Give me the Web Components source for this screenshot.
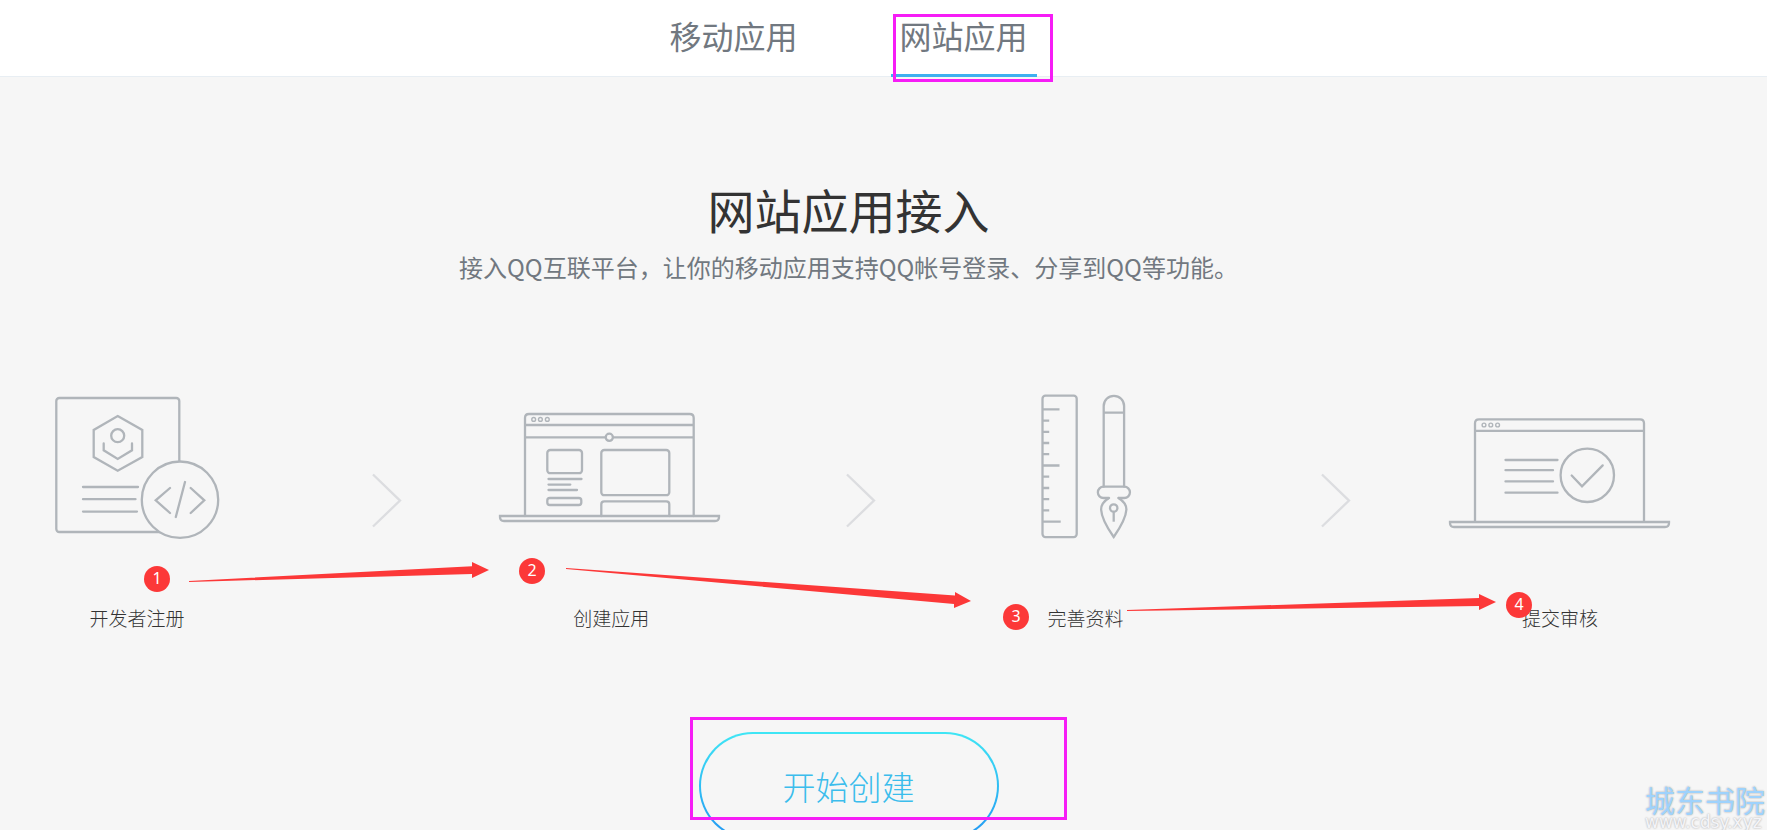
<!DOCTYPE html>
<html lang="zh-CN">
<head>
<meta charset="utf-8">
<title>网站应用接入</title>
<style>
  html, body {
    height: 100%;
    margin: 0;
  }

  body {
    overflow: hidden;
    background: #f6f6f6;
    font-family: "Noto Sans CJK SC", sans-serif;
    color: #333;
  }
</style>
</head>
<body>
<connect-page></connect-page>

<template id="nav-tab">
  <style>
    :host {
      display: block;
    }

    a {
      display: block;
      box-sizing: border-box;
      height: 77px;
      padding: 0 9px;
      border-bottom: 3px solid transparent;
      font-size: 32px;
      line-height: 70px;
      color: #717880;
      text-decoration: none;
    }

    :host([active]) a {
      border-color: #3fb0f0;
    }
  </style>
  <a href="#"><slot></slot></a>
</template>

<template id="flow-step">
  <style>
    :host {
      display: flex;
      flex-direction: column;
      align-items: center;
      width: 220px;
    }

    span {
      margin-top: 61px;
      font-size: 19px;
      font-weight: 300;
      line-height: 30px;
    }
  </style>
  <slot name="icon"></slot>
  <span><slot></slot></span>
</template>

<template id="flow-chevron">
  <style>
    :host {
      display: block;
      width: 56px;
    }

    svg {
      display: block;
      fill: none;
      stroke: #dcdde0;
      stroke-width: 2.3;
    }
  </style>
  <svg width="56" height="150" viewBox="0 0 56 150"><path d="M27 82.5L54 108.6 27 134.5"/></svg>
</template>

<template id="start-button">
  <style>
    :host {
      display: block;
    }

    button {
      width: 300px;
      height: 108px;
      padding: 0;
      border: 2px solid transparent;
      border-radius: 54px;
      background: linear-gradient(#f6f6f6, #f6f6f6) padding-box,
        linear-gradient(#3fe6f5, #2196f3) border-box;
      font: 300 33px "Noto Sans CJK SC", sans-serif;
      color: #3bbdec;
    }
  </style>
  <button type="button"><slot></slot></button>
</template>

<template id="site-mark">
  <style>
    :host {
      display: block;
      width: 122px;
      white-space: nowrap;
      text-shadow: 0 0 2px #bbb, 0 0 2px #ccc;
    }

    div {
      font-size: 30px;
      line-height: 30px;
      color: #9ed2fc;
    }

    small {
      display: block;
      font: 17px/16px "DejaVu Sans", sans-serif;
      color: #f4f4f8;
    }
  </style>
  <div>城东书院</div>
  <small>www.cdsy.xyz</small>
</template>

<template id="note-layer">
  <style>
    :host {
      position: absolute;
      inset: 0;
      pointer-events: none;
    }

    .frame {
      position: absolute;
      box-sizing: border-box;
      border: 3px solid #f61df6;
    }

    .badge {
      position: absolute;
      width: 26px;
      height: 26px;
      border-radius: 50%;
      background: #fc3838;
      font: 16px/24px "Noto Sans", sans-serif;
      text-align: center;
      color: #fff;
    }

    svg {
      position: absolute;
      left: 0;
      top: 0;
      fill: #fc3838;
    }
  </style>
  <svg width="1767" height="830" viewBox="0 0 1767 830">
    <path d="M189 581L472 566.300V562L489 570 472 578V574L189 582z"/>
    <path d="M566 568L955 595.500V592L971 601 954 608V604L566 569z"/>
    <path d="M1127 610L1479 598V594L1496 602 1479 610V606L1127 611z"/>
  </svg>
  <div class="frame" style="left: 893px; top: 14px; width: 160px; height: 68px"></div>
  <div class="frame" style="left: 690px; top: 717px; width: 377px; height: 103px"></div>
  <div class="badge" style="left: 144px; top: 566px">1</div>
  <div class="badge" style="left: 519px; top: 558px">2</div>
  <div class="badge" style="left: 1003px; top: 604px">3</div>
  <div class="badge" style="left: 1506px; top: 592px">4</div>
</template>

<template id="connect-page">
  <style>
    :host {
      display: block;
      position: relative;
      height: 100%;
      overflow: hidden;
    }

    nav {
      display: flex;
      justify-content: center;
      gap: 84px;
      height: 76px;
      padding-right: 70px;
      border-bottom: 1px solid #e8eef3;
      background: #fff;
    }

    main {
      display: flex;
      flex-direction: column;
      align-items: center;
      padding: 97px 70px 0 0;
    }

    h1 {
      margin: 0;
      font-size: 47px;
      font-weight: 400;
      line-height: 70px;
    }

    p {
      margin: 5px 0 0;
      font-size: 24px;
      line-height: 36px;
      color: #717880;
    }

    .steps {
      display: flex;
      justify-content: space-between;
      align-self: stretch;
      margin: 107px 0 99px;
      padding: 0 27px;
    }

    .steps svg {
      display: block;
      overflow: visible;
      fill: none;
      stroke: #b0b5ba;
      stroke-width: 2.3;
      stroke-linecap: round;
    }

    site-mark {
      position: absolute;
      right: 0;
      bottom: 0;
    }
  </style>
  <nav>
    <nav-tab>移动应用</nav-tab>
    <nav-tab active>网站应用</nav-tab>
  </nav>
  <main>
    <h1>网站应用接入</h1>
    <p>接入QQ互联平台，让你的移动应用支持QQ帐号登录、分享到QQ等功能。</p>
    <div class="steps">
      <flow-step>
        <svg slot="icon" width="220" height="150" viewBox="0 0 220 150">
          <rect x="29.3" y="6" width="123" height="134" rx="3"/>
          <path d="M90.7 24L115.3 38V65L90.7 78.7 66.7 65V38z"/>
          <circle cx="90.7" cy="43.7" r="6.5"/>
          <path d="M76.7 51.5V58.3L90.7 67 105 58.3V51.5"/>
          <path d="M56 95H111M56 107.2H108.5M56 119.6H110"/>
          <circle cx="153" cy="107.7" r="38.2" fill="#f6f6f6"/>
          <path d="M143 96L128.7 108.3 143 121M158 90L148.8 125M163.7 96L177.3 108.3 163.7 121"/>
        </svg>
        开发者注册
      </flow-step>
      <flow-chevron></flow-chevron>
      <flow-step>
        <svg slot="icon" width="220" height="150" viewBox="0 0 220 150">
          <path d="M24 124V26Q24 22 28 22H188.7Q192.7 22 192.7 26V124M24 33H192.7M24 45.3H192.7"/>
          <g stroke-width="1.4"><circle cx="32.7" cy="27.4" r="1.9"/><circle cx="39.4" cy="27.4" r="1.9"/><circle cx="46.3" cy="27.4" r="1.9"/></g>
          <circle cx="108.3" cy="45.3" r="3.6" fill="#f6f6f6"/>
          <rect x="46.3" y="58" width="34.7" height="23.2" rx="3"/>
          <path d="M47.5 87H80.5M47.5 92.6H69.3M47.5 98H76"/>
          <rect x="46.3" y="106" width="34" height="7" rx="2.5"/>
          <rect x="100.3" y="58" width="68" height="45.2" rx="3"/>
          <path d="M100.3 124V112.3Q100.3 109.3 103.3 109.3H165.3Q168.3 109.3 168.3 112.3V124"/>
          <path d="M-1 124H218V125Q218 129 214 129H3Q-1 129 -1 125z"/>
        </svg>
        创建应用
      </flow-step>
      <flow-chevron></flow-chevron>
      <flow-step>
        <svg slot="icon" width="220" height="150" viewBox="0 0 220 150">
          <rect x="66.5" y="3.7" width="34.2" height="141.4" rx="3"/>
          <path stroke-linecap="butt" d="M67 17.3H83.5M67 28.6H73.2M67 39.8H73.2M67 51H73.2M67 62.2H73.2M67 73.5H83.5M67 84.7H73.2M67 96H73.2M67 107.1H73.2M67 118.4H73.2M67 129.6H84.7"/>
          <path d="M127.7 94.7V14A10.2 10.2 0 0 1 148.1 14V94.7M127.7 20.7H148.1"/>
          <path d="M132.5 106H127.5A5.6 5.6 0 0 1 127.5 94.7H148.3A5.6 5.6 0 0 1 148.3 106H142.8"/>
          <path d="M133 106C128 109 125.1 113 125.1 117.5C125.5 125 131 135.5 137.7 145C144.3 135.5 150 125 150.4 117.5C150.4 113 147.4 109 142.4 106"/>
          <circle cx="137.7" cy="116" r="3.7"/>
          <path stroke-linecap="butt" d="M137.7 119.7V129.7"/>
        </svg>
        完善资料
      </flow-step>
      <flow-chevron></flow-chevron>
      <flow-step>
        <svg slot="icon" width="220" height="150" viewBox="0 0 220 150">
          <path d="M25 129.7V31.3Q25 27.3 29 27.3H190Q194 27.3 194 31.3V129.7M25 38.9H194"/>
          <g stroke-width="1.4"><circle cx="34" cy="33" r="1.9"/><circle cx="40.8" cy="33" r="1.9"/><circle cx="47.6" cy="33" r="1.9"/></g>
          <path d="M55.5 68H107.5M55.5 78.2H103M55.5 89.4H103M55.5 100.7H107.5"/>
          <circle cx="137.3" cy="83.3" r="26.7"/>
          <path d="M121.7 83.5L132 94.3 152.7 73.4"/>
          <path d="M0 130H219V131Q219 135 215 135H4Q0 135 0 131z"/>
        </svg>
        提交审核
      </flow-step>
    </div>
    <start-button>开始创建</start-button>
  </main>
  <site-mark></site-mark>
  <note-layer></note-layer>
</template>

<script>
class TemplateElement extends HTMLElement {
  constructor() {
    super();
    const template = document.getElementById(this.localName);
    this.attachShadow({ mode: 'open' });
    this.shadowRoot.appendChild(template.content.cloneNode(true));
  }
}

customElements.define('nav-tab', class extends TemplateElement {});
customElements.define('flow-step', class extends TemplateElement {});
customElements.define('flow-chevron', class extends TemplateElement {});
customElements.define('start-button', class extends TemplateElement {});
customElements.define('site-mark', class extends TemplateElement {});
customElements.define('note-layer', class extends TemplateElement {});
customElements.define('connect-page', class extends TemplateElement {});
</script>
</body>
</html>
